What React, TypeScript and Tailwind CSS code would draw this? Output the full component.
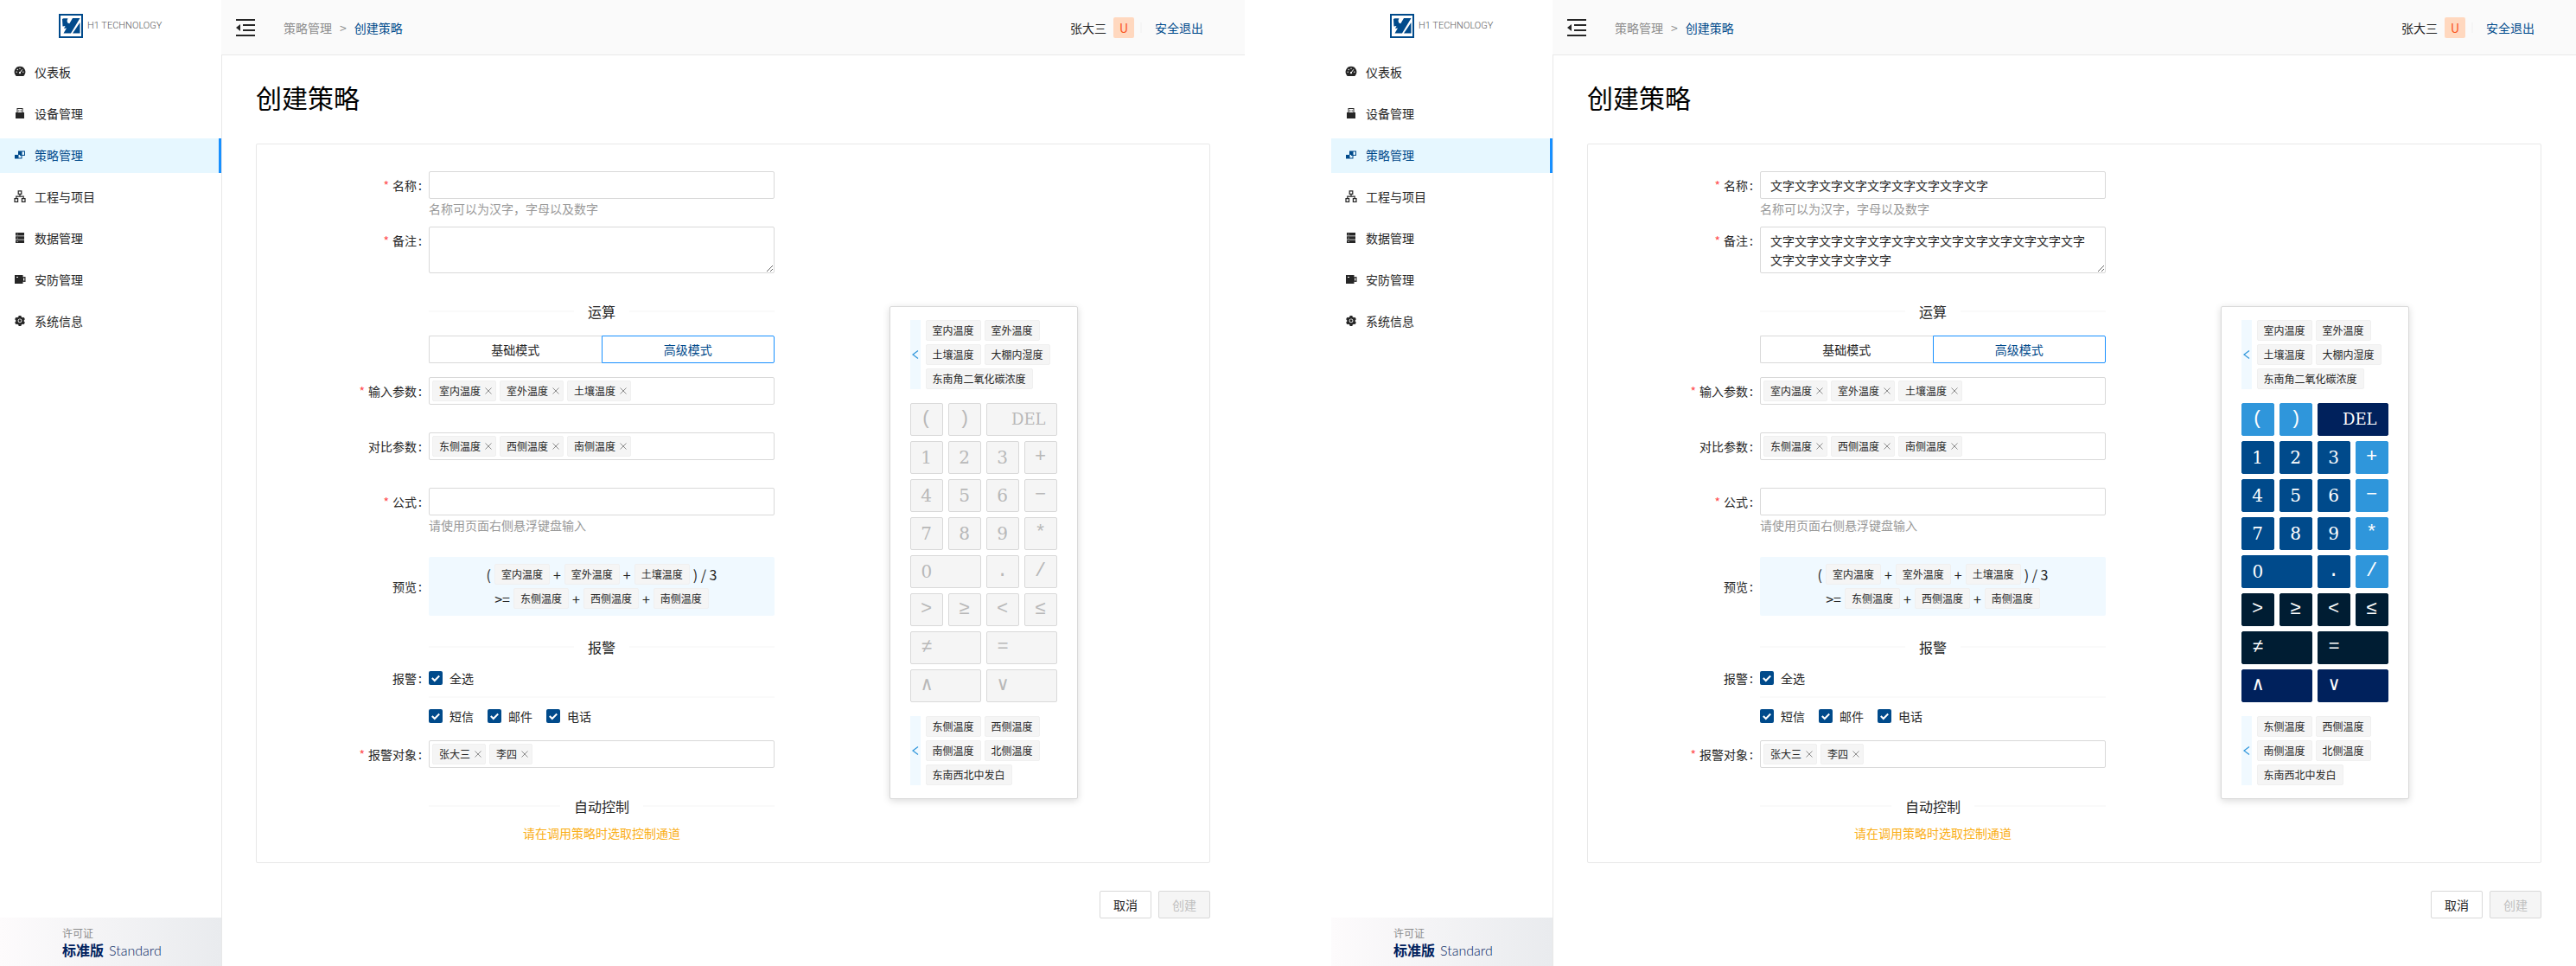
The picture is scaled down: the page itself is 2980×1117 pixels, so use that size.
import React, { useId } from "react";
import { AiFillSetting } from "react-icons/ai";

const sans = "font-['Noto_Sans_CJK_SC',sans-serif]";

function Logo() {
  return (
    <svg viewBox="0 0 28 28" className="size-7 shrink-0" aria-hidden="true">
      <rect x="1" y="1" width="26" height="26" fill="#fff" stroke="#004a8b" strokeWidth="2" />
      <path fill="#004a8b" d="M4 6l1.500-.800h5L9.500 8l.800 2.500 2 .700L16 5h8.500L14 22.500H5.500L9 16.500l-3 .500L7.500 14 4.500 14.500z" />
      <path fill="#004a8b" d="M24.500 10v12.500H16z" />
    </svg>
  );
}

function CollapseIcon() {
  return (
    <svg viewBox="0 0 22 20" className="h-5 w-[22px]" fill="#262626" aria-hidden="true">
      <path d="M0 0h22v2H0zM8 6h14v2H8zM8 12h14v2H8zM0 18h22v2H0zM0 10l5-4v8z" />
    </svg>
  );
}

function IconDashboard() {
  return (
    <svg viewBox="0 0 14 14" className="size-[14px]" aria-hidden="true">
      <path fill="currentColor" d="M7 .700a6.400 6.400 0 0 0-5.200 10.100l.9 1.200h8.600l.9-1.200A6.400 6.400 0 0 0 7 .700z" />
      <circle cx="3.200" cy="7.300" r=".7" fill="#fff" />
      <circle cx="4.300" cy="4.500" r=".7" fill="#fff" />
      <circle cx="7" cy="3.200" r=".7" fill="#fff" />
      <circle cx="10.800" cy="7.300" r=".7" fill="#fff" />
      <path d="M7 8.200L9.800 4.300" stroke="#fff" strokeWidth="1" />
      <circle cx="7" cy="8.200" r="1.100" fill="#fff" />
    </svg>
  );
}
function IconDevice() {
  return (
    <svg viewBox="0 0 14 14" className="size-[14px]" fill="currentColor" aria-hidden="true">
      <path d="M3.500 1h7v5H12v7H2V6h1.500zm1 1V6h5V2zM5.200 3.500h1.200v1.200H5.200zM7.600 3.500h1.200v1.200H7.600z" fillRule="evenodd" />
    </svg>
  );
}
function IconStrategy() {
  return (
    <svg viewBox="0 0 14 14" className="size-[14px]" fill="currentColor" aria-hidden="true">
      <path fillRule="evenodd" d="M5 2.500h8V8H9.500v3.500H1V7h4zM9.500 3.500V7H12V3.500zM5.500 7v3.500h3V8H7V7z" />
    </svg>
  );
}
function IconProject() {
  return (
    <svg viewBox="0 0 14 14" className="size-[14px]" fill="none" stroke="currentColor" strokeWidth="1.200" aria-hidden="true">
      <path d="M5.200.8h3.600v3.600H5.200zM1 9.700h3.600v3.600H1zM9.400 9.700H13v3.600H9.400zM7 4.400v2.700M2.800 9.700V7.100h8.400v2.600" />
    </svg>
  );
}
function IconData() {
  return (
    <svg viewBox="0 0 14 14" className="size-[14px]" fill="currentColor" aria-hidden="true">
      <path fillRule="evenodd" d="M2 1h10v3.500H2zM2 5.300h10v3.500H2zM2 9.600h10V13H2zM3.500 2.400h1.200v.8H3.500zM3.500 6.700h1.200v.8H3.500zM3.500 11h1.200v.8H3.500z" />
    </svg>
  );
}
function IconSecurity() {
  return (
    <svg viewBox="0 0 14 14" className="size-[14px]" fill="currentColor" aria-hidden="true">
      <path fillRule="evenodd" d="M1 2h9.500v2.200L13.500 4v6l-3-.2V12H1zM3 4v1h2V4zM11 5.400v3.200h1.300V5.400z" />
    </svg>
  );
}

const menu = [
  { label: "仪表板", icon: <IconDashboard /> },
  { label: "设备管理", icon: <IconDevice /> },
  { label: "策略管理", icon: <IconStrategy />, active: true },
  { label: "工程与项目", icon: <IconProject /> },
  { label: "数据管理", icon: <IconData /> },
  { label: "安防管理", icon: <IconSecurity /> },
  { label: "系统信息", icon: <AiFillSetting className="size-[14px]" /> },
];

function Sidebar() {
  return (
    <aside className="flex w-64 shrink-0 flex-col bg-white">
      <div className="flex h-[60px] items-center gap-[5px] pl-[68px]">
        <Logo />
        <span className="font-['Roboto',sans-serif] text-[11px] font-light text-[#595959]">H1 TECHNOLOGY</span>
      </div>
      <nav className="mt-1 flex flex-col gap-2">
        {menu.map((m) => (
          <a
            key={m.label}
            href="#"
            className={
              m.active
                ? "flex h-10 items-center gap-[10px] border-r-[3px] border-[#1890ff] bg-[#e6f7ff] pb-0.5 pl-4 text-[#004a8b]"
                : "flex h-10 items-center gap-[10px] pb-0.5 pl-4 text-[#262626]"
            }
          >
            {m.icon}
            {m.label}
          </a>
        ))}
      </nav>
      <div className="mt-auto h-14 bg-linear-to-r from-[#fdfbfc] to-[#e9ebee] pt-2 pl-[72px]">
        <div className="text-xs leading-5 text-[#8c8c8c]">许可证</div>
        <div className="flex items-baseline gap-[6px] text-base leading-[18px] text-[#00215e]">
          <b className="font-bold">标准版</b>
          <span className="font-['Lato',sans-serif] font-light">Standard</span>
        </div>
      </div>
    </aside>
  );
}

function Header() {
  return (
    <header className="flex h-16 items-center border-b border-[#e8e8e8] bg-[#fafafa] pr-12 pl-[17px]">
      <button aria-label="收起菜单">
        <CollapseIcon />
      </button>
      <nav className="ml-[33px] flex items-center gap-[9px]">
        <a href="#" className="text-[#8c8c8c]">策略管理</a>
        <span className="text-[#8c8c8c]">&gt;</span>
        <span className="text-[#004a8b]">创建策略</span>
      </nav>
      <div className="ml-auto flex items-center">
        <span className="text-[#262626]">张大三</span>
        <span className="ml-2 flex size-6 items-center justify-center rounded-xs bg-[#ffd8bf] text-sm text-[#fa541c]">U</span>
        <span className="ml-[7px] h-3 w-0.5 bg-[#f5f5f5]" />
        <a href="#" className="ml-[15px] text-[#004a8b]">安全退出</a>
      </div>
    </header>
  );
}

function Row({
  label,
  required,
  htmlFor,
  className,
  labelClass = "h-8",
  children,
}: {
  label?: string;
  required?: boolean;
  htmlFor?: string;
  className?: string;
  labelClass?: string;
  children: React.ReactNode;
}) {
  return (
    <div className={`flex ${className ?? ""}`}>
      <div className={`flex w-[199px] shrink-0 items-center justify-end pr-2 ${labelClass}`}>
        {label && (
          <label htmlFor={htmlFor} className="flex items-center">
            {required && <span className="mr-1 text-[#ff4d4f]">*</span>}
            {label}
            <span className="ml-0.5 w-1 text-center">:</span>
          </label>
        )}
      </div>
      <div className="w-[400px]">{children}</div>
    </div>
  );
}

function Divider({ children }: { children: React.ReactNode }) {
  return (
    <div className="flex h-6 items-center gap-4 text-base">
      <span className="h-0.5 flex-1 bg-[#fafafa]" />
      <h2>{children}</h2>
      <span className="h-0.5 flex-1 bg-[#fafafa]" />
    </div>
  );
}

function Tag({ children }: { children: React.ReactNode }) {
  return (
    <span className="flex h-6 items-center rounded-xs border border-[#f0f0f0] bg-[#f5f5f5] px-[7px] text-xs leading-none">
      {children}
    </span>
  );
}

function Op({ children }: { children: React.ReactNode }) {
  return <span className="text-base leading-6">{children}</span>;
}

function TagInput({ id, tags }: { id: string; tags: string[] }) {
  return (
    <div className="flex h-8 items-center gap-1 rounded-xs border border-[#d9d9d9] px-[3px]">
      {tags.map((t) => (
        <span key={t} className="flex h-6 items-center rounded-xs border border-[#f0f0f0] bg-[#f5f5f5] pr-1 pl-[7px] text-xs leading-none">
          {t}
          <button type="button" aria-label={`移除 ${t}`} className="ml-[5px]">
            <svg viewBox="0 0 8 8" className="size-2" stroke="#8c8c8c" fill="none" aria-hidden="true">
              <path d="M.5.500l7 7M7.500.500l-7 7" />
            </svg>
          </button>
        </span>
      ))}
      <input id={id} className="h-6 min-w-0 flex-1 outline-none" />
    </div>
  );
}

function Check({ children }: { children: React.ReactNode }) {
  return (
    <label className="flex h-4 items-center gap-2">
      <span className="grid size-4">
        <input type="checkbox" defaultChecked className="col-start-1 row-start-1 size-4 appearance-none rounded-xs bg-[#004a8b]" />
        <svg viewBox="0 0 16 16" className="pointer-events-none col-start-1 row-start-1 size-4" fill="none" stroke="#fff" strokeWidth="2" aria-hidden="true">
          <path d="M3.800 8l3 3 5.400-5.500" />
        </svg>
      </span>
      {children}
    </label>
  );
}

type Tone = "sky" | "blue" | "dark" | "navy";
const keys: { k: string; tone: Tone; wide?: boolean }[] = [
  { k: "(", tone: "sky" }, { k: ")", tone: "sky" }, { k: "DEL", tone: "navy", wide: true },
  { k: "1", tone: "blue" }, { k: "2", tone: "blue" }, { k: "3", tone: "blue" }, { k: "+", tone: "sky" },
  { k: "4", tone: "blue" }, { k: "5", tone: "blue" }, { k: "6", tone: "blue" }, { k: "−", tone: "sky" },
  { k: "7", tone: "blue" }, { k: "8", tone: "blue" }, { k: "9", tone: "blue" }, { k: "*", tone: "sky" },
  { k: "0", tone: "blue", wide: true }, { k: ".", tone: "blue" }, { k: "/", tone: "sky" },
  { k: ">", tone: "dark" }, { k: "≥", tone: "dark" }, { k: "<", tone: "dark" }, { k: "≤", tone: "dark" },
  { k: "≠", tone: "dark", wide: true }, { k: "=", tone: "dark", wide: true },
  { k: "∧", tone: "navy", wide: true }, { k: "∨", tone: "navy", wide: true },
];
const tones: Record<Tone, string> = {
  sky: "border-[#2f96db] bg-[#2f96db] text-white",
  blue: "border-[#004a8b] bg-[#004a8b] text-white",
  dark: "border-[#001d33] bg-[#001d33] text-white",
  navy: "border-[#00215c] bg-[#00215c] text-white",
};

function keyFont(k: string) {
  if (k === "DEL") return "font-['DejaVu_Serif',serif] text-lg";
  if (/[0-9]/.test(k)) return "font-['DejaVu_Serif',serif] text-xl";
  return "font-['Liberation_Mono','DejaVu_Sans_Mono',monospace] text-[22px]";
}

function keyAlign(k: string, wide?: boolean) {
  if (!wide) return "justify-center";
  return k === "DEL" ? "col-span-2 justify-end pr-3" : "col-span-2 pl-3";
}

function TagGroup({ rows }: { rows: string[][] }) {
  return (
    <div className="flex gap-[6px]">
      <button type="button" aria-label="上一组" className="flex w-3 items-center justify-center bg-[#f0f9ff]">
        <svg viewBox="0 0 8 10" className="h-[10px] w-2" fill="none" stroke="#2f96db" strokeWidth="1.200" aria-hidden="true">
          <path d="M7 .500L1 5l6 4.500" />
        </svg>
      </button>
      <div className="flex flex-col gap-1">
        {rows.map((r) => (
          <div key={r[0]} className="flex gap-1">
            {r.map((t) => (
              <Tag key={t}>{t}</Tag>
            ))}
          </div>
        ))}
      </div>
    </div>
  );
}

function Keypad({ enabled }: { enabled: boolean }) {
  return (
    <section className="flex w-[218px] flex-col gap-4 rounded-xs border border-[#d9d9d9] bg-white px-[23px] py-[15px] shadow-[0_2px_8px_rgba(0,0,0,0.15)]">
      <TagGroup rows={[["室内温度", "室外温度"], ["土壤温度", "大棚内湿度"], ["东南角二氧化碳浓度"]]} />
      <div className="grid grid-cols-4 gap-[6px]">
        {keys.map(({ k, tone, wide }) => (
          <button
            key={k}
            type="button"
            disabled={!enabled}
            className={`flex h-[38px] items-center rounded-xs border leading-none ${keyFont(k)} ${keyAlign(k, wide)} ${
              enabled ? tones[tone] : "border-[#d9d9d9] bg-[#f5f5f5] text-[#b8b8b8]"
            }`}
          >
            {k}
          </button>
        ))}
      </div>
      <TagGroup rows={[["东侧温度", "西侧温度"], ["南侧温度", "北侧温度"], ["东南西北中发白"]]} />
    </section>
  );
}

function StrategyForm({ name, remark }: { name: string; remark: string }) {
  const id = useId();
  const box = "w-full rounded-xs border border-[#d9d9d9] px-[11px] outline-none";
  return (
    <form className="w-[599px] shrink-0">
      <Row label="名称" required htmlFor={`${id}-name`}>
        <input id={`${id}-name`} defaultValue={name} className={`${box} block h-8`} />
        <p className="h-6 leading-[22px] text-[#999]">名称可以为汉字，字母以及数字</p>
      </Row>
      <Row label="备注" required htmlFor={`${id}-remark`} className="mt-2">
        <textarea id={`${id}-remark`} defaultValue={remark} className={`${box} block h-[54px] resize-y overflow-hidden py-1 leading-[22px]`} />
      </Row>
      <Row className="mt-8" labelClass="h-6">
        <Divider>运算</Divider>
        <div className="mt-4 flex">
          <button type="button" className="h-8 flex-1 rounded-l-xs border border-r-0 border-[#d9d9d9]">基础模式</button>
          <button type="button" className="h-8 flex-1 rounded-r-xs border border-[#1890ff] text-[#004a8b]">高级模式</button>
        </div>
      </Row>
      <Row label="输入参数" required htmlFor={`${id}-in`} className="mt-4">
        <TagInput id={`${id}-in`} tags={["室内温度", "室外温度", "土壤温度"]} />
      </Row>
      <Row label="对比参数" htmlFor={`${id}-cmp`} className="mt-8">
        <TagInput id={`${id}-cmp`} tags={["东侧温度", "西侧温度", "南侧温度"]} />
      </Row>
      <Row label="公式" required htmlFor={`${id}-formula`} className="mt-8">
        <input id={`${id}-formula`} className={`${box} block h-8`} />
        <p className="h-6 leading-[22px] text-[#999]">请使用页面右侧悬浮键盘输入</p>
      </Row>
      <Row label="预览" className="mt-6" labelClass="h-[68px]">
        <output className="flex h-[68px] flex-col items-center gap-1 rounded-xs bg-[#f0f9ff] pt-2">
          <span className="flex h-6 items-center gap-1">
            <Op>(</Op>
            <Tag>室内温度</Tag>
            <Op>+</Op>
            <Tag>室外温度</Tag>
            <Op>+</Op>
            <Tag>土壤温度</Tag>
            <Op>) / 3</Op>
          </span>
          <span className="flex h-6 items-center gap-1">
            <Op>&gt;=</Op>
            <Tag>东侧温度</Tag>
            <Op>+</Op>
            <Tag>西侧温度</Tag>
            <Op>+</Op>
            <Tag>南侧温度</Tag>
          </span>
        </output>
      </Row>
      <Row className="mt-6" labelClass="h-6">
        <Divider>报警</Divider>
      </Row>
      <Row label="报警" className="mt-4" labelClass="h-4">
        <Check>全选</Check>
        <hr className="mt-[13px] h-0.5 border-0 bg-[#fafafa]" />
        <div className="mt-[13px] flex gap-4">
          <Check>短信</Check>
          <Check>邮件</Check>
          <Check>电话</Check>
        </div>
      </Row>
      <Row label="报警对象" required htmlFor={`${id}-who`} className="mt-5">
        <TagInput id={`${id}-who`} tags={["张大三", "李四"]} />
      </Row>
      <Row className="mt-8" labelClass="h-6">
        <Divider>自动控制</Divider>
        <p className="mt-2 text-center leading-[22px] text-[#faad14]">请在调用策略时选取控制通道</p>
      </Row>
    </form>
  );
}

function Page({ name, remark, enabled }: { name: string; remark: string; enabled: boolean }) {
  return (
    <div className="flex min-h-screen min-w-0 bg-white">
      <Sidebar />
      <div className="flex min-w-0 flex-1 flex-col">
        <Header />
        <main className="flex-1 border-l border-[#e8e8e8] pt-7 pr-10 pl-[39px]">
          <h1 className="text-3xl leading-10 text-black">创建策略</h1>
          <div className="mt-[34px] flex items-start rounded-xs border border-[#e8e8e8] pt-[31px] pb-[23px]">
            <StrategyForm name={name} remark={remark} />
            <div className="flex flex-1 justify-center pt-[156px] pr-5">
              <Keypad enabled={enabled} />
            </div>
          </div>
          <div className="mt-8 flex justify-end gap-2">
            <button className="h-8 rounded-xs border border-[#d9d9d9] px-[15px]">取消</button>
            <button disabled className="h-8 rounded-xs border border-[#d9d9d9] bg-[#f5f5f5] px-[15px] text-[#bfbfbf]">创建</button>
          </div>
        </main>
      </div>
    </div>
  );
}

export default function App() {
  return (
    <div className={`grid grid-cols-2 gap-[100px] bg-white text-sm text-[#262626] ${sans}`}>
      <Page name="" remark="" enabled={false} />
      <Page
        name="文字文字文字文字文字文字文字文字文字"
        remark="文字文字文字文字文字文字文字文字文字文字文字文字文字文字文字文字文字文字"
        enabled
      />
    </div>
  );
}
